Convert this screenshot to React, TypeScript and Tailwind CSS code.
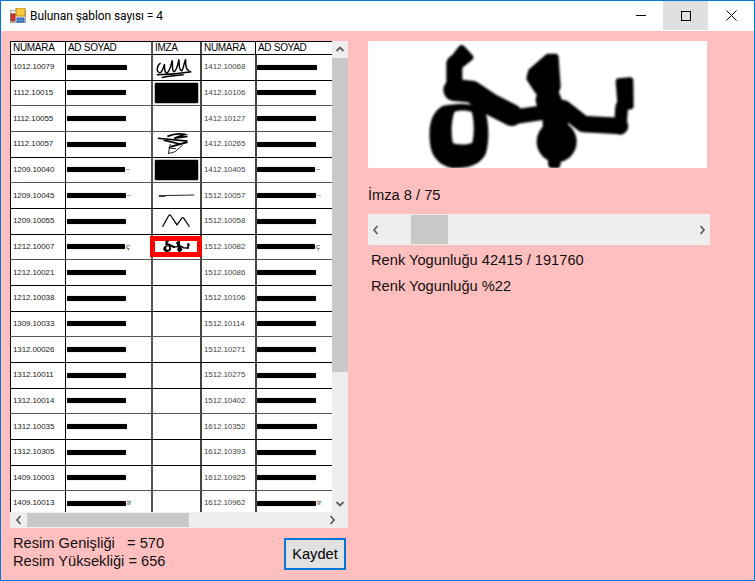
import React from "react";

const rows = [
  ["1012.10079", "1412.10068", "sig1", 60, ""],
  ["1112.10015", "1412.10106", "solid", 59, ""],
  ["1112.10055", "1412.10127", "", 59, ""],
  ["1112.10057", "1412.10265", "sig2", 59, ""],
  ["1209.10040", "1412.10405", "solid", 58, "tail"],
  ["1209.10045", "1512.10057", "line", 59, "tail"],
  ["1209.10055", "1512.10058", "zig", 59, ""],
  ["1212.10007", "1512.10082", "selected", 58, "ç"],
  ["1212.10021", "1512.10086", "", 59, ""],
  ["1212.10038", "1512.10106", "", 59, ""],
  ["1309.10033", "1512.10114", "", 59, ""],
  ["1312.00026", "1512.10271", "", 59, ""],
  ["1312.10011", "1512.10275", "", 59, ""],
  ["1312.10014", "1512.10402", "", 59, ""],
  ["1312.10035", "1612.10352", "", 60, ""],
  ["1312.10305", "1612.10393", "", 59, ""],
  ["1409.10003", "1612.10925", "", 59, ""],
  ["1409.10013", "1612.10962", "", 59, "ir"],
] as [string, string, string, number, string][];

// thicker grey row lines, same as the scaled image
const heavyRows = [1, 2, 4, 7, 10, 13, 16];

const BigSignature = ({ className, viewBox }: { className: string; viewBox: string }) => (
  <svg className={className} viewBox={viewBox} preserveAspectRatio="none">
    <g fill="#000" stroke="#000" strokeLinecap="round" strokeLinejoin="round">
      {/* top hook of the left letter */}
      <path d="M320 145 L345 172 L310 200 L285 190 Z" strokeWidth="20" />
      <path d="M298 190 L298 262" fill="none" strokeWidth="48" />
      <path d="M298 270 L350 275 L405 312 L470 345" fill="none" strokeWidth="66" />
      <path d="M470 352 L560 338" fill="none" strokeWidth="44" />
      {/* loop */}
      <path
        fillRule="evenodd"
        stroke="none"
        d="M262 318 C285 312 345 305 385 325 C402 350 405 420 392 462 C375 495 340 506 290 504 C255 498 228 470 225 430 C220 385 225 340 262 318 Z M298 336 C288 365 288 405 294 430 C315 436 340 434 352 428 C358 400 358 360 350 336 C335 330 310 330 298 336 Z"
      />
      {/* right letter */}
      <path d="M580 172 L600 172 L606 260 L590 310 L548 270 L525 235 L530 215 Z" strokeWidth="22" />
      <path d="M580 300 L600 350 L605 440" fill="none" strokeWidth="76" />
      <ellipse cx="605" cy="425" rx="60" ry="62" stroke="none" />
      <path d="M598 480 L598 490" fill="none" strokeWidth="38" />
      <path d="M625 325 L685 372 L795 378" fill="none" strokeWidth="50" />
      <path d="M796 385 L800 320" fill="none" strokeWidth="38" />
      <path d="M792 245 L825 242 L826 318 L798 322 Z" strokeWidth="20" />
    </g>
  </svg>
);

const Signature = ({ kind }: { kind: string }) => {
  if (kind === "solid") {
    return <div className="mx-auto h-[20px] w-[43px] rounded-[1px] bg-black shadow-[0_0_1px_1px_#bbb]" />;
  }
  if (kind === "sig1") {
    return (
      <svg className="h-[25px] w-[49px]" viewBox="0 0 49 25">
        <path
          d="M8 8 C4 10 3 17 7 18 C10 18 11 11 12 9 C12 13 12 19 15 18 C18 15 19 9 20 5 C21 9 19 16 22 17 C25 15 26 9 27 4 C28 9 26 15 30 16 C32 13 32 9 34 4 C34 10 34 15 38 16 M4 20 C15 20 28 19 40 17 M9 23 C16 21 24 21 32 20"
          fill="none"
          stroke="#000"
          strokeWidth="1.5"
        />
      </svg>
    );
  }
  if (kind === "sig2") {
    return (
      <svg className="h-[25px] w-[49px]" viewBox="0 0 49 25">
        <path
          d="M5 6 L36 9 M15 4 C20 2 28 1 33 2 L22 6 L36 4 M11 8 L28 12 L18 15 L36 10"
          fill="none"
          stroke="#000"
          strokeWidth="1.8"
        />
        <path d="M18 12 L16 22 L23 20 L31 13 M16 16 L24 17" fill="none" stroke="#000" strokeWidth="0.9" />
      </svg>
    );
  }
  if (kind === "line") {
    return (
      <svg className="h-[25px] w-[49px]" viewBox="0 0 49 25">
        <path d="M6 13 L13 13" stroke="#000" strokeWidth="1.6" />
        <path d="M13 12.5 L43 12" stroke="#000" strokeWidth="0.9" />
      </svg>
    );
  }
  if (kind === "zig") {
    return (
      <svg className="h-[25px] w-[49px]" viewBox="0 0 49 25">
        <path
          d="M10 18 L16 7 Q17.5 4 19 7 L25 16 L30 9 Q31 8 32 9 L38 18"
          fill="none"
          stroke="#000"
          strokeWidth="1.3"
        />
      </svg>
    );
  }
  return null;
};

const NameBar = ({ width, tail }: { width: number; tail: string }) => (
  <div className="flex items-center pl-[1px]">
    <div className="h-[5px] rounded-[1px] bg-black shadow-[0_0_1px_#666]" style={{ width }} />
    {tail === "tail" && <div className="ml-[1px] h-px w-[4px] bg-[#aaa]" />}
    {tail !== "tail" && tail !== "" && (
      <span className="ml-[1px] text-[8px] leading-none text-[#444]">{tail}</span>
    )}
  </div>
);

const Chevron = ({ dir }: { dir: "up" | "down" | "left" | "right" }) => {
  const d = {
    up: "M1.5 6 L5 2.5 L8.5 6",
    down: "M1.5 3 L5 6.5 L8.5 3",
    left: "M6.5 1 L3 5 L6.5 9",
    right: "M3.5 1 L7 5 L3.5 9",
  }[dir];
  return (
    <svg className="h-[10px] w-[10px]" viewBox="0 0 10 10">
      <path d={d} fill="none" stroke="#606060" strokeWidth="1.8" />
    </svg>
  );
};

const AppIcon = () => (
  <svg className="h-[16px] w-[16px]" viewBox="0 0 16 16">
    <rect x="0.5" y="2.5" width="15" height="12" fill="#f2f2f2" stroke="#a8a8a8" />
    <rect x="6" y="0" width="9" height="8" fill="#f7c93e" stroke="#c48a16" />
    <rect x="1" y="6" width="4" height="7" fill="#d9352b" stroke="#8f2a22" />
    <rect x="7" y="10" width="7" height="4" fill="#4f86d8" stroke="#2f5fa8" />
  </svg>
);

export default function App() {
  return (
    <div className="flex h-[581px] w-[755px] flex-col overflow-hidden border border-[#0078d7] bg-[#ffbfbf] font-['Liberation_Sans',sans-serif] text-[14.67px] text-[#111]">
      {/* title bar */}
      <div className="flex h-[30px] items-start justify-between bg-white">
        <div className="flex h-[30px] items-center pl-[9px]">
          <AppIcon />
          <span className="ml-[4px] font-['Roboto',sans-serif] text-[12px] tracking-[-0.08px] text-black">
            Bulunan şablon sayısı = 4
          </span>
        </div>
        <div className="flex">
          <div className="flex h-[29px] w-[45px] items-center justify-center">
            <div className="h-px w-[10px] bg-black" />
          </div>
          <div className="flex h-[29px] w-[45px] items-center justify-center bg-[#e0e0e0]">
            <div className="h-[10px] w-[10px] border border-black" />
          </div>
          <div className="flex h-[29px] w-[46px] items-center justify-center">
            <svg className="h-[11px] w-[11px]" viewBox="0 0 11 11">
              <path d="M0.5 0.5 L10.5 10.5 M10.5 0.5 L0.5 10.5" stroke="#000" strokeWidth="1" />
            </svg>
          </div>
        </div>
      </div>

      <div className="flex flex-1 pl-[9px] pt-[10px]">
        {/* left column: scanned list */}
        <div className="w-[338px]">
          <div className="h-[487px] w-[338px]">
            <div className="flex h-[471px]">
              <div className="h-[471px] w-[322px] overflow-hidden bg-white font-['Liberation_Sans',sans-serif] text-black">
                <div className="flex h-[14px] w-[330px] border-y border-black text-[10px] leading-[12px] tracking-[-0.3px]">
                  <div className="w-[55px] border-l border-black pl-[2px]">NUMARA</div>
                  <div className="w-[86px] border-l border-black pl-[2px]">AD SOYAD</div>
                  <div className="w-[49px] border-l-2 border-[#555] pl-[2px]">İMZA</div>
                  <div className="w-[55px] border-l-2 border-[#444] pl-[2px]">NUMARA</div>
                  <div className="w-[85px] border-l border-black pl-[2px]">AD SOYAD</div>
                </div>
                {rows.map(([left, right, sig, bar, tail], i) => (
                  <div
                    key={left}
                    className={`flex h-[25.67px] w-[330px] border-b text-[8px] leading-none ${
                      heavyRows.includes(i) ? "border-[#555]" : "border-black"
                    }`}
                  >
                    <div className="flex w-[55px] items-center border-l border-black pl-[2px] tracking-[-0.1px] text-[#222]">
                      {left}
                    </div>
                    <div className="flex w-[86px] items-center border-l border-black">
                      <NameBar width={bar} tail={tail} />
                    </div>
                    <div className="relative flex w-[49px] items-center justify-center border-l-2 border-[#555]">
                      <Signature kind={sig} />
                      {sig === "selected" && (
                        <div className="absolute left-[-3px] top-[1px] flex h-[21px] w-[52px] items-center justify-center border-[5px] border-[#ff0000] bg-white">
                          <BigSignature className="h-[12px] w-[27px] shrink-0" viewBox="215 130 630 375" />
                        </div>
                      )}
                    </div>
                    <div className="flex w-[55px] items-center border-l-2 border-[#444] pl-[2px] tracking-[-0.1px] text-[#444]">
                      {right}
                    </div>
                    <div className="flex w-[85px] items-center border-l-2 border-[#444]">
                      <div className="-ml-px">
                        <NameBar width={bar} tail={tail} />
                      </div>
                    </div>
                  </div>
                ))}
              </div>
              {/* vertical scrollbar */}
              <div className="flex h-[471px] w-[16px] flex-col bg-[#eeeeee]">
                <div className="flex h-[17px] items-center justify-center">
                  <Chevron dir="up" />
                </div>
                <div className="h-[314px] bg-[#c8c8c8]" />
                <div className="flex-1" />
                <div className="flex h-[16px] items-center justify-center">
                  <Chevron dir="down" />
                </div>
              </div>
            </div>
            {/* horizontal scrollbar */}
            <div className="flex h-[16px] items-center bg-[#eeeeee]">
              <div className="flex h-[16px] w-[17px] items-center justify-center">
                <Chevron dir="left" />
              </div>
              <div className="h-[14px] w-[162px] bg-[#c8c8c8]" />
              <div className="flex-1" />
              <div className="flex h-[16px] w-[32px] items-center justify-center">
                <Chevron dir="right" />
              </div>
            </div>
          </div>
          <div className="flex justify-between pt-[6px]">
            <div className="pl-[3px] leading-[18px]">
              <div className="whitespace-pre">Resim Genişliği   = 570</div>
              <div>Resim Yüksekliği = 656</div>
            </div>
            <button className="mr-[2px] mt-[4px] h-[32px] w-[62px] border-2 border-[#0078d7] bg-[#e1e1e1] text-[14.67px] text-black">
              Kaydet
            </button>
          </div>
        </div>

        {/* right column: selected signature */}
        <div className="ml-[20px] w-[342px]">
          <div className="h-[127px] w-[339px] overflow-hidden bg-white">
            <BigSignature className="h-[127px] w-[339px] blur-[1.2px]" viewBox="39 123 1017 381" />
          </div>
          <div className="mt-[18px] leading-[18px]">İmza 8 / 75</div>
          <div className="mt-[10px] flex h-[31px] items-center bg-[#eeeeee]">
            <div className="flex w-[16px] justify-center">
              <Chevron dir="left" />
            </div>
            <div className="ml-[27px] h-[29px] w-[37px] bg-[#c8c8c8]" />
            <div className="flex-1" />
            <div className="flex w-[16px] justify-center">
              <Chevron dir="right" />
            </div>
          </div>
          <div className="mt-[6px] pl-[3px] leading-[18px]">Renk Yogunluğu 42415 / 191760</div>
          <div className="mt-[8px] pl-[3px] leading-[18px]">Renk Yogunluğu %22</div>
        </div>
      </div>
    </div>
  );
}
